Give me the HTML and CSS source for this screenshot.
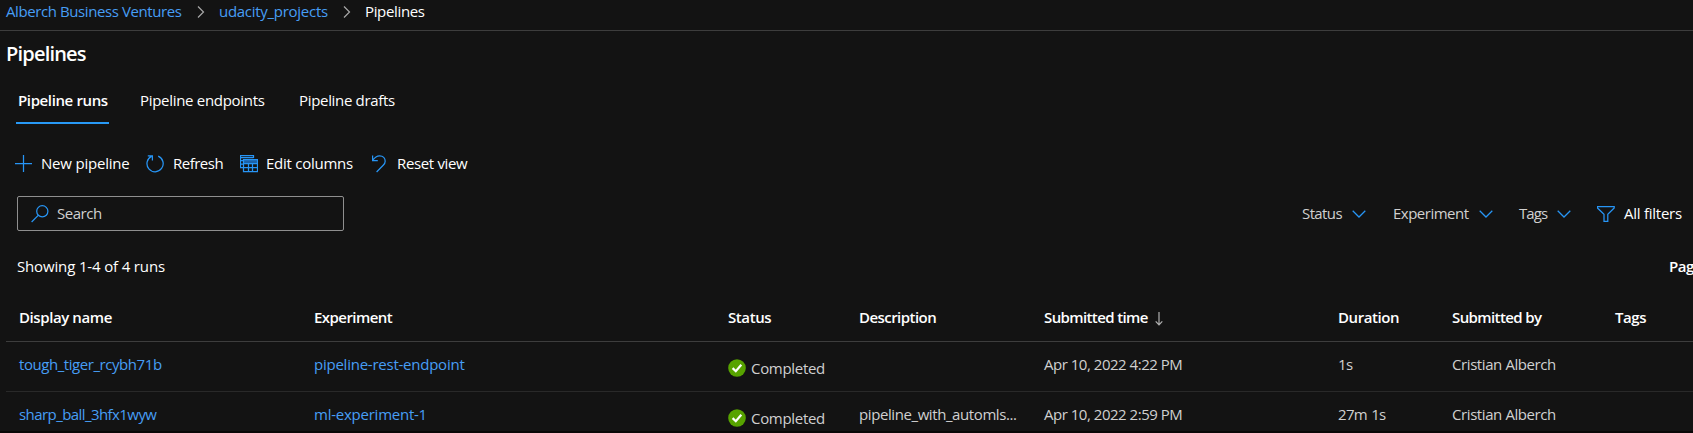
FILE: index.html
```html
<!DOCTYPE html>
<html lang="en">
<head>
<meta charset="utf-8">
<title>Pipelines</title>
<link rel="stylesheet" href="styles.css">
</head>
<body>
<div class="page">
  <nav class="breadcrumb">
    <a class="crumb-workspace">Alberch Business Ventures</a>
    <svg class="crumb-sep" width="8" height="14" viewBox="0 0 8 14"><path d="M1 1.5L6.5 7L1 12.5"/></svg>
    <a class="crumb-project">udacity_projects</a>
    <svg class="crumb-sep" width="8" height="14" viewBox="0 0 8 14"><path d="M1 1.5L6.5 7L1 12.5"/></svg>
    <span class="crumb-current">Pipelines</span>
  </nav>
  <h1 class="title">Pipelines</h1>
  <div class="tabs">
    <div class="tab tab-active">Pipeline runs</div>
    <div class="tab tab-endpoints">Pipeline endpoints</div>
    <div class="tab">Pipeline drafts</div>
  </div>
  <div class="toolbar">
    <div class="command command-new">
      <svg class="icon" width="18" height="18" viewBox="0 0 18 18"><path d="M0 8.5H17M8.5 0V17"/></svg>
      <span>New pipeline</span>
    </div>
    <div class="command command-refresh">
      <svg class="icon" width="18" height="18" viewBox="0 0 18 18"><path d="M12.2 1.2A8.1 8.1 0 1 1 5.5 1.4M1.8 0.8H6.4V5.6"/></svg>
      <span>Refresh</span>
    </div>
    <div class="command command-columns">
      <svg class="icon" width="18" height="18" viewBox="0 0 18 18"><path class="icon-fill" d="M3 4H18V8H3z"/><path d="M3.5 4.5H17.5V16.5H3.5zM3.5 8.5H17.5M3.5 12.5H17.5M8.5 8V16.5M12.5 8V16.5M13.5 3V0.5H0.5V12.5H3M0.5 2.7H13.5M0 5.5H3M0 9H3"/></svg>
      <span>Edit columns</span>
    </div>
    <div class="command command-reset">
      <svg class="icon" width="16" height="18" viewBox="0 0 16 18"><path d="M0.6 0.5V5.5H5.8M0.8 5.2C2.6 2.5 4.6 0.8 7.6 0.8C11.1 0.8 13.2 3.2 13.2 6.2C13.2 8 12.4 9.1 11.2 10.3L4.6 17"/></svg>
      <span>Reset view</span>
    </div>
  </div>
  <div class="filter-bar">
    <div class="search">
      <svg class="icon" width="18" height="18" viewBox="0 0 18 18"><circle cx="11.3" cy="6.3" r="5.6"/><path d="M7.2 10.4L0.6 17"/></svg>
      <span>Search</span>
    </div>
    <div class="filters">
      <div class="filter filter-status"><span>Status</span><svg class="icon" width="14" height="8" viewBox="0 0 14 8"><path d="M0.7 0.7L7 7L13.3 0.7"/></svg></div>
      <div class="filter filter-experiment"><span>Experiment</span><svg class="icon" width="14" height="8" viewBox="0 0 14 8"><path d="M0.7 0.7L7 7L13.3 0.7"/></svg></div>
      <div class="filter filter-tags"><span>Tags</span><svg class="icon" width="14" height="8" viewBox="0 0 14 8"><path d="M0.7 0.7L7 7L13.3 0.7"/></svg></div>
      <div class="all-filters"><svg class="icon" width="18" height="16" viewBox="0 0 18 16"><path d="M0.5 0.5H17.2V2L10.8 8.3V15.3H7V8.3L0.5 2z"/></svg><span>All filters</span></div>
    </div>
  </div>
  <div class="summary">
    <span class="count">Showing 1-4 of 4 runs</span>
    <span class="pager">Pag</span>
  </div>
  <div class="table">
    <div class="row row-head">
      <span>Display name</span>
      <span class="head-experiment">Experiment</span>
      <span>Status</span>
      <span class="head-description">Description</span>
      <span class="head-time">Submitted time<svg class="sort" width="8" height="14" viewBox="0 0 8 14"><path d="M4 0V12.5M0.7 9.4L4 12.8L7.3 9.4"/></svg></span>
      <span>Duration</span>
      <span class="head-by">Submitted by</span>
      <span>Tags</span>
    </div>
    <div class="row">
      <a class="run-name">tough_tiger_rcybh71b</a>
      <a class="experiment">pipeline-rest-endpoint</a>
      <span class="status"><svg width="18" height="18" viewBox="0 0 18 18"><circle cx="9" cy="9" r="8.8" fill="#57a300"/><path d="M4.6 9.1L7.8 12.2L13.3 5.8" fill="none" stroke="#fff" stroke-width="2.2"/></svg><span>Completed</span></span>
      <span></span>
      <span class="time">Apr 10, 2022 4:22 PM</span>
      <span class="duration">1s</span>
      <span>Cristian Alberch</span>
      <span></span>
    </div>
    <div class="row">
      <a class="run-name run-name-tight">sharp_ball_3hfx1wyw</a>
      <a class="experiment">ml-experiment-1</a>
      <span class="status"><svg width="18" height="18" viewBox="0 0 18 18"><circle cx="9" cy="9" r="8.8" fill="#57a300"/><path d="M4.6 9.1L7.8 12.2L13.3 5.8" fill="none" stroke="#fff" stroke-width="2.2"/></svg><span>Completed</span></span>
      <span class="description">pipeline_with_automls...</span>
      <span class="time">Apr 10, 2022 2:59 PM</span>
      <span class="duration">27m 1s</span>
      <span>Cristian Alberch</span>
      <span></span>
    </div>
  </div>
</div>
</body>
</html>
```
FILE: styles.css
```css
* { box-sizing: border-box; }

body {
  margin: 0;
  background: #131313;
  color: #fff;
  font: 15px/20px "Open Sans", "Noto Sans", sans-serif;
  letter-spacing: -0.35px;
  white-space: nowrap;
}

.page {
  height: 433px;
  overflow: hidden;
  border-bottom: 2px solid #090707;
}

a { color: #479ef5; }
svg { display: block; flex: none; }
.icon { fill: none; stroke: #2795f5; stroke-width: 1.25; }
.icon .icon-fill { fill: #1b61a8; stroke: none; }

.breadcrumb {
  display: flex;
  height: 31px;
  padding: 1px 0 0 6px;
  border-bottom: 1px solid #3d3d3d;
}
.crumb-sep { margin-top: 4px; fill: none; stroke: #a8a8a8; stroke-width: 1.2; }
.crumb-workspace { width: 191px; letter-spacing: -0.41px; }
.crumb-project { width: 124px; margin-left: 14px; letter-spacing: -0.28px; }
.crumb-current { margin-left: 14px; }

.title {
  margin: 9px 0 0 6px;
  font-size: 20px;
  font-weight: 600;
  line-height: 28px;
  letter-spacing: -0.8px;
}

.tabs { display: flex; padding: 22px 0 0 16px; }
.tab { height: 34px; padding-left: 1px; letter-spacing: -0.32px; }
.tab-active {
  width: 93px;
  margin-right: 30px;
  padding-left: 2px;
  font-weight: 600;
  letter-spacing: -0.38px;
  border-bottom: 2px solid #2899f5;
}
.tab-endpoints { width: 159px; letter-spacing: -0.3px; }

.toolbar { display: flex; padding: 29px 0 0 15px; }
.command { display: flex; align-items: flex-start; }
.command .icon { margin-top: 2px; }
.command-new { width: 131px; gap: 8px; letter-spacing: -0.2px; }
.command-refresh { width: 94px; gap: 9px; letter-spacing: -0.5px; }
.command-columns { width: 132px; gap: 8px; letter-spacing: -0.26px; }
.command-reset { gap: 9px; }

.filter-bar {
  display: flex;
  justify-content: space-between;
  padding: 23px 0 0 17px;
}
.search {
  display: flex;
  align-items: center;
  gap: 8px;
  width: 327px;
  height: 35px;
  padding-left: 13px;
  border: 1px solid #8f8f8f;
  border-radius: 2px;
  color: #d0d0d0;
  letter-spacing: -0.46px;
}
.search span, .filters span { margin-top: -2px; }
.filters { display: flex; align-items: center; width: 391px; color: #d0d0d0; }
.filter { display: flex; align-items: center; gap: 10px; }
.filter-status { width: 91px; letter-spacing: -0.6px; }
.filter-experiment { width: 126px; letter-spacing: -0.5px; }
.filter-tags { width: 78px; letter-spacing: -0.9px; }
.all-filters { display: flex; align-items: center; gap: 9px; color: #fff; letter-spacing: -0.25px; }

.summary { display: flex; justify-content: space-between; padding: 25px 0 0 17px; }
.count { letter-spacing: -0.15px; }
.pager { width: 24px; overflow: hidden; font-weight: 600; letter-spacing: -0.4px; }

.table { margin: 17px 0 0 6px; }
.row {
  display: grid;
  grid-template-columns: 295px 414px 131px 185px 294px 114px 163px 1fr;
  height: 50px;
  padding: 12px 0 0 13px;
  border-bottom: 1px solid #292929;
  color: #d0d0d0;
  letter-spacing: -0.41px;
}
.row-head {
  height: 49px;
  padding-top: 14px;
  border-color: #3d3d3d;
  color: #fff;
  font-weight: 600;
}
.head-experiment, .head-description { letter-spacing: -0.55px; }
.head-time { display: flex; gap: 7px; letter-spacing: -0.62px; }
.head-by { letter-spacing: -0.6px; }
.sort { margin-top: 5px; fill: none; stroke: #b0b0b0; stroke-width: 1.2; }
.run-name { letter-spacing: -0.44px; }
.run-name-tight { letter-spacing: -0.57px; }
.experiment { letter-spacing: -0.24px; }
.status { display: flex; gap: 5px; padding-top: 4px; letter-spacing: -0.31px; }
.status svg { margin-top: 1px; }
.time { letter-spacing: -0.48px; }
.duration { letter-spacing: -0.7px; word-spacing: 1px; }
```
